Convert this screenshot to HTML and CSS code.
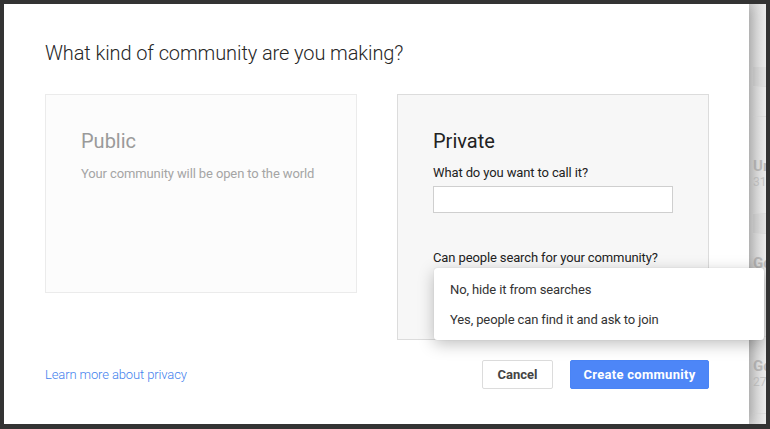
FILE: index.html
```html
<!DOCTYPE html>
<html lang="en">
<head>
<meta charset="UTF-8">
<title>Create community</title>
<link rel="stylesheet" href="styles.css">
</head>
<body>
<div class="screen">
    <div class="dialog">
        <h1 class="dialog-title">What kind of community are you making?</h1>

        <div class="choices">
            <div class="choice choice-public">
                <h2>Public</h2>
                <p>Your community will be open to the world</p>
            </div>

            <div class="choice choice-private">
                <h2>Private</h2>
                <label for="community-name">What do you want to call it?</label>
                <input type="text" id="community-name" class="name-input">
                <p class="search-question">Can people search for your community?</p>

                <ul class="search-menu">
                    <li>No, hide it from searches</li>
                    <li>Yes, people can find it and ask to join</li>
                </ul>
            </div>
        </div>

        <div class="dialog-footer">
            <a href="#" class="privacy-link">Learn more about privacy</a>
            <div class="actions">
                <button class="btn btn-cancel">Cancel</button>
                <button class="btn btn-create">Create community</button>
            </div>
        </div>
    </div>

    <div class="page-behind">
        <div class="row row-band row-top"></div>
        <div class="row row-empty"></div>
        <div class="row row-item row-first">
            <strong>Un</strong>
            <span>31</span>
        </div>
        <div class="row row-band"></div>
        <div class="row row-item row-second">
            <strong>Go</strong>
        </div>
        <div class="row row-item row-third">
            <strong>Go</strong>
            <span>27</span>
        </div>
    </div>
</div>
</body>
</html>
```

FILE: styles.css
```css
body {
    margin: 0;
    background-color: #333333;
    font-family: Roboto, "Liberation Sans", sans-serif;
}

.screen {
    display: flex;
    height: 420px;
    margin: 4px 4px 5px 4px;
    background-color: #ebebeb;
    overflow: hidden;
}

.dialog {
    width: 745px;
    flex-shrink: 0;
    background-color: #ffffff;
    padding: 0 40px 0 41px;
    box-sizing: border-box;
    box-shadow: 2px 0 14px rgba(0, 0, 0, 0.28);
    position: relative;
    z-index: 2;
    letter-spacing: -0.12px;
}

.dialog-title {
    margin: 35px 0 0 0;
    font-size: 20px;
    font-weight: 300;
    line-height: 28px;
    letter-spacing: -0.1px;
    color: #262626;
}

.choices {
    display: flex;
    gap: 40px;
    margin-top: 27px;
    align-items: flex-start;
}

.choice {
    width: 312px;
    box-sizing: border-box;
    padding: 33px 35px 0 35px;
    border: 1px solid #e3e3e3;
}

.choice h2 {
    margin: 0;
    font-size: 20px;
    font-weight: 400;
    line-height: 26px;
    letter-spacing: 0;
}

.choice-public {
    height: 199px;
    background-color: #fcfcfc;
    border-color: #ebebeb;
}

.choice-public h2 {
    color: #9a9a9a;
}

.choice-public p {
    margin: 12px 0 0 0;
    font-size: 13px;
    color: #a5a5a5;
}

.choice-private {
    height: 246px;
    background-color: #f7f7f7;
    border-color: #dcdcdc;
    position: relative;
}

.choice-private h2 {
    color: #222222;
}

.choice-private label {
    display: block;
    margin-top: 10px;
    font-size: 13px;
    line-height: 18px;
    color: #222222;
}

.name-input {
    display: block;
    width: 240px;
    height: 27px;
    box-sizing: border-box;
    margin-top: 4px;
    border: 1px solid #cfcfcf;
    background-color: #ffffff;
    padding: 0 6px;
    font: inherit;
}

.search-question {
    margin: 36px 0 0 0;
    font-size: 13px;
    line-height: 18px;
    color: #222222;
}

.search-menu {
    position: absolute;
    left: 36px;
    top: 173px;
    width: 330px;
    margin: 0;
    padding: 7px 0 5px 0;
    list-style: none;
    background-color: #ffffff;
    border-radius: 3px;
    box-shadow: 0 4px 16px rgba(0, 0, 0, 0.25), 0 0 1px rgba(0, 0, 0, 0.2);
    z-index: 5;
}

.search-menu li {
    padding: 0 16px;
    line-height: 30px;
    font-size: 13px;
    color: #333333;
}

.dialog-footer {
    display: flex;
    justify-content: space-between;
    align-items: center;
    margin-top: 20px;
}

.privacy-link {
    font-size: 13px;
    font-weight: 300;
    color: #427fed;
    text-decoration: none;
}

.actions {
    display: flex;
    gap: 17px;
}

.btn {
    height: 29px;
    padding: 0 8px;
    border-radius: 2px;
    font-family: inherit;
    font-size: 13px;
    font-weight: 700;
    cursor: pointer;
}

.btn-cancel {
    width: 71px;
    background-color: #ffffff;
    border: 1px solid #dcdcdc;
    color: #444444;
}

.btn-create {
    width: 139px;
    background-color: #4d86f7;
    border: 1px solid #4a84f5;
    color: #ffffff;
    letter-spacing: 0.3px;
}

.page-behind {
    flex: 1;
    padding-left: 4px;
    background: linear-gradient(to right, #d6d6d6, #ececec);
    overflow: hidden;
    white-space: nowrap;
}

.row {
    box-sizing: border-box;
    border-bottom: 1px solid #dedede;
}

.row-top {
    height: 19px;
    margin-top: 63px;
    background-color: rgba(0, 0, 0, 0.04);
}

.row-empty {
    height: 30px;
}

.row-band {
    height: 20px;
    background-color: rgba(0, 0, 0, 0.03);
}

.row-item {
    padding-top: 20px;
}

.row-first {
    height: 97px;
    padding-top: 40px;
}

.row-second {
    height: 103px;
}

.row-third {
    height: 77px;
}

.row-item strong {
    display: block;
    font-size: 15px;
    line-height: 18px;
    color: #bcbcbc;
}

.row-item span {
    display: block;
    font-size: 12px;
    line-height: 15px;
    color: #c8c8c8;
}
```
